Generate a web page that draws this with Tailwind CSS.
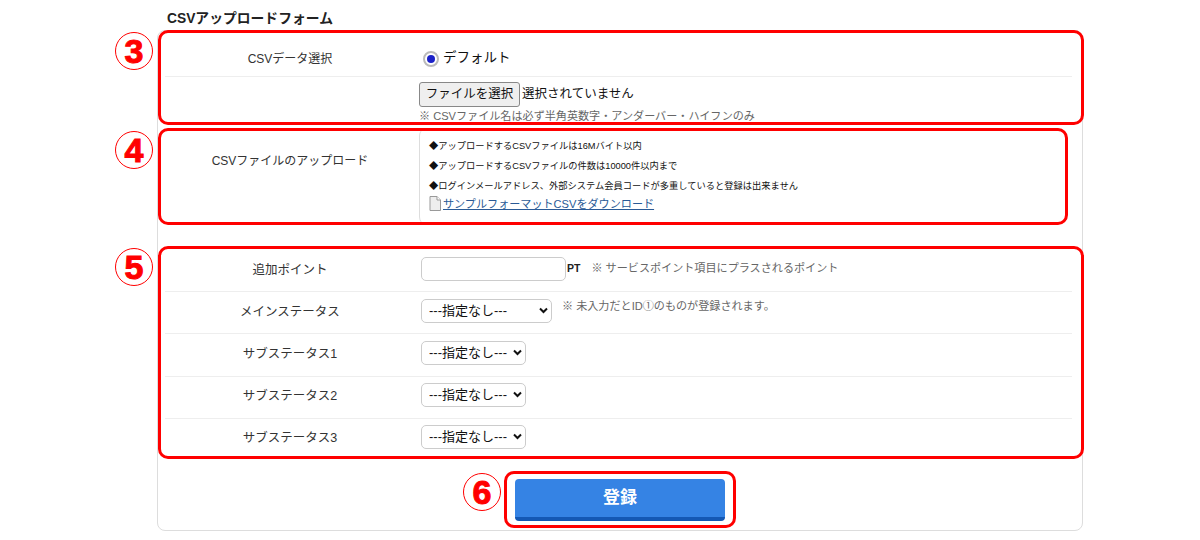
<!DOCTYPE html>
<html lang="ja">
    <head>
        <meta charset="UTF-8" />
        <title>CSVアップロードフォーム</title>
        <script src="https://cdn.jsdelivr.net/npm/@tailwindcss/browser@4"></script>
    </head>
    <body class="relative bg-white w-[1200px] h-[540px] overflow-hidden text-[#222] font-['Liberation_Sans','Noto_Sans_CJK_JP',sans-serif]">
        <div class="ml-[157px] w-[926px] pt-[11px]">
            <h2 class="pl-[10px] h-[19px] text-[13.8px] leading-[15px] font-bold">CSVアップロードフォーム</h2>

            <div class="h-[501px] border border-[#ddd] rounded-[8px] pl-[7px] pr-[10px]">
                <!-- CSV data select -->
                <div class="flex h-[46px] pt-[10px] border-b border-[#eee]">
                    <div class="w-[253px] pr-[3px] flex items-center justify-center text-[12px] text-[#333]">CSVデータ選択</div>
                    <div class="flex items-center pl-[5px] gap-[4px]">
                        <span class="w-[16px] h-[16px] rounded-full border-2 border-[#bbb] bg-white flex items-center justify-center">
                            <span class="w-[8px] h-[8px] rounded-full bg-[#1c22c8]"></span>
                        </span>
                        <span class="text-[13.5px] text-[#111]">デフォルト</span>
                    </div>
                </div>
                <div class="flex h-[51px]">
                    <div class="w-[253px]"></div>
                    <div class="pt-[5px] pl-[1px]">
                        <div class="flex items-center gap-[2px]">
                            <button class="w-[101px] h-[25px] bg-[#efefef] border border-[#888] rounded-[3px] text-[12.5px] text-[#111]">ファイルを選択</button>
                            <span class="text-[12.5px] text-[#111]">選択されていません</span>
                        </div>
                        <p class="text-[11.1px] leading-[15px] mt-[2px] text-[#666]">※ CSVファイル名は必ず半角英数字・アンダーバー・ハイフンのみ</p>
                    </div>
                </div>

                <!-- CSV upload -->
                <div class="flex h-[97px]">
                    <div class="w-[253px] pr-[3px] flex items-center justify-center pb-[31px] text-[12px] text-[#333]">CSVファイルのアップロード</div>
                    <div class="ml-[1px] flex-1 border-l border-[#ddd] rounded-l-[8px] pl-[9px] pt-[9px] text-[9.25px] text-[#111]">
                        <p class="h-[20px] leading-[18px]">◆アップロードするCSVファイルは16Mバイト以内</p>
                        <p class="h-[20px] leading-[18px]">◆アップロードするCSVファイルの件数は10000件以内まで</p>
                        <p class="h-[19px] leading-[18px]">◆ログインメールアドレス、外部システム会員コードが多重していると登録は出来ません</p>
                        <a href="#" class="flex items-center gap-[2px] text-[11.1px] leading-[17px] text-[#2a5a96]">
                            <svg class="w-[12px] h-[15px] -mt-[3px]" viewBox="0 0 12 15">
                                <path d="M1 .5h7l3.5 3.5v10.500h-10.500z" fill="#eee" stroke="#999" />
                                <path d="M8 .5v3.500h3.500" fill="#fff" stroke="#999" />
                            </svg>
                            <span class="underline">サンプルフォーマットCSVをダウンロード</span>
                        </a>
                    </div>
                </div>

                <!-- points and statuses -->
                <div class="mt-[23px]">
                    <div class="flex h-[44px] border-b border-[#eee]">
                        <div class="w-[253px] pr-[3px] flex items-center justify-center pt-[1px] text-[12.5px] text-[#333]">追加ポイント</div>
                        <div class="flex items-center pl-[3px] pb-[2px]">
                            <input type="text" class="w-[145px] h-[24px] border border-[#ccc] rounded-[5px] bg-white" />
                            <span class="ml-[1px] text-[10.5px] font-bold">PT</span>
                            <span class="ml-[11px] text-[11.1px] text-[#666]">※ サービスポイント項目にプラスされるポイント</span>
                        </div>
                    </div>
                    <div class="flex h-[42px] border-b border-[#eee]">
                        <div class="w-[253px] pr-[3px] flex items-center justify-center text-[12.5px] text-[#333]">メインステータス</div>
                        <div class="flex items-start pt-[6px] pl-[3px]">
                            <div class="relative w-[131px] h-[24px]">
                                <select class="appearance-none w-full h-full border border-[#ccc] rounded-[5px] bg-white pl-[7px] text-[13px] text-[#111]">
                                    <option>---指定なし---</option>
                                </select>
                                <svg class="absolute right-[4px] top-[9px] w-[9px] h-[7px] pointer-events-none" viewBox="0 0 9 7"><path d="M1 1.500l3.500 3.500l3.500-3.500" fill="none" stroke="#111" stroke-width="2" /></svg>
                            </div>
                            <span class="ml-[10px] mt-[1px] text-[11.1px] leading-[15px] text-[#666]">※ 未入力だとID①のものが登録されます。</span>
                        </div>
                    </div>
                    <div class="flex h-[43px] border-b border-[#eee]">
                        <div class="w-[253px] pr-[3px] flex items-center justify-center pb-[2px] text-[12.5px] text-[#333]">サブステータス1</div>
                        <div class="pt-[6px] pl-[3px]">
                            <div class="relative w-[105px] h-[24px]">
                                <select class="appearance-none w-full h-full border border-[#ccc] rounded-[5px] bg-white pl-[7px] text-[13px] text-[#111]">
                                    <option>---指定なし---</option>
                                </select>
                                <svg class="absolute right-[4px] top-[9px] w-[9px] h-[7px] pointer-events-none" viewBox="0 0 9 7"><path d="M1 1.500l3.500 3.500l3.500-3.500" fill="none" stroke="#111" stroke-width="2" /></svg>
                            </div>
                        </div>
                    </div>
                    <div class="flex h-[42px] border-b border-[#eee]">
                        <div class="w-[253px] pr-[3px] flex items-center justify-center pb-[2px] text-[12.5px] text-[#333]">サブステータス2</div>
                        <div class="pt-[5px] pl-[3px]">
                            <div class="relative w-[105px] h-[24px]">
                                <select class="appearance-none w-full h-full border border-[#ccc] rounded-[5px] bg-white pl-[7px] text-[13px] text-[#111]">
                                    <option>---指定なし---</option>
                                </select>
                                <svg class="absolute right-[4px] top-[9px] w-[9px] h-[7px] pointer-events-none" viewBox="0 0 9 7"><path d="M1 1.500l3.500 3.500l3.500-3.500" fill="none" stroke="#111" stroke-width="2" /></svg>
                            </div>
                        </div>
                    </div>
                    <div class="flex h-[40px]">
                        <div class="w-[253px] pr-[3px] flex items-center justify-center pb-[2px] text-[12.5px] text-[#333]">サブステータス3</div>
                        <div class="pt-[5px] pl-[3px]">
                            <div class="relative w-[105px] h-[24px]">
                                <select class="appearance-none w-full h-full border border-[#ccc] rounded-[5px] bg-white pl-[7px] text-[13px] text-[#111]">
                                    <option>---指定なし---</option>
                                </select>
                                <svg class="absolute right-[4px] top-[9px] w-[9px] h-[7px] pointer-events-none" viewBox="0 0 9 7"><path d="M1 1.500l3.500 3.500l3.500-3.500" fill="none" stroke="#111" stroke-width="2" /></svg>
                            </div>
                        </div>
                    </div>
                </div>

                <div class="mt-[20px] ml-[350px]">
                    <button class="block w-[210px] h-[42px] bg-[#3583e4] border-b-[4px] border-[#1458b4] rounded-[4px] text-white text-[17px] font-bold">登録</button>
                </div>
            </div>
        </div>

        <!-- annotation frames -->
        <div class="absolute left-[158px] top-[30px] w-[926px] h-[95px] border-[3px] border-[#f00] rounded-[10px]"></div>
        <div class="absolute left-[158px] top-[128px] w-[910px] h-[97px] border-[3px] border-[#f00] rounded-[10px]"></div>
        <div class="absolute left-[158px] top-[246px] w-[926px] h-[213px] border-[3px] border-[#f00] rounded-[10px]"></div>
        <div class="absolute left-[504px] top-[471px] w-[232px] h-[57px] border-[3px] border-[#f00] rounded-[10px]"></div>

        <span class="absolute left-[115px] top-[32px] w-[38px] h-[38px] rounded-full border-[1.5px] border-[#f00] flex items-center justify-center text-[34px] leading-none font-bold text-[#f00] [-webkit-text-stroke:1px_#f00]">3</span>
        <span class="absolute left-[115px] top-[131px] w-[38px] h-[38px] rounded-full border-[1.5px] border-[#f00] flex items-center justify-center text-[34px] leading-none font-bold text-[#f00] [-webkit-text-stroke:1px_#f00]">4</span>
        <span class="absolute left-[115px] top-[248px] w-[38px] h-[38px] rounded-full border-[1.5px] border-[#f00] flex items-center justify-center text-[34px] leading-none font-bold text-[#f00] [-webkit-text-stroke:1px_#f00]">5</span>
        <span class="absolute left-[463px] top-[473px] w-[38px] h-[38px] rounded-full border-[1.5px] border-[#f00] flex items-center justify-center text-[34px] leading-none font-bold text-[#f00] [-webkit-text-stroke:1px_#f00]">6</span>
    </body>
</html>
